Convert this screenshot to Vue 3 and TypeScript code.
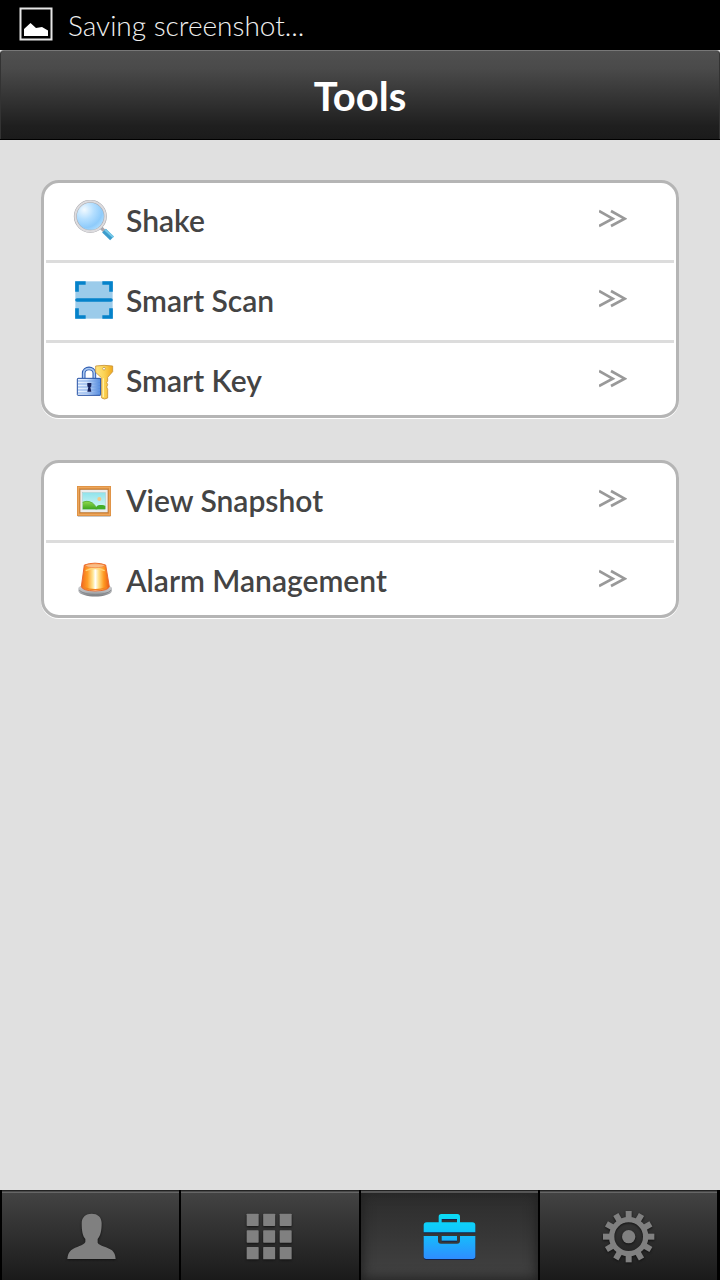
<script setup lang="ts">
type Tool = { id: string; label: string }

const groups: Tool[][] = [
  [
    { id: 'shake', label: 'Shake' },
    { id: 'scan', label: 'Smart Scan' },
    { id: 'key', label: 'Smart Key' },
  ],
  [
    { id: 'snapshot', label: 'View Snapshot' },
    { id: 'alarm', label: 'Alarm Management' },
  ],
]

const gearTeeth: number[] = Array.from({ length: 12 }, (_, i) => i * 30)
const tiles: number[] = [0, 1, 2]
const stripes: number[] = [348, 357, 366, 375, 384]
</script>

<template>
  <div class="screen">
    <div class="status">
      <svg class="status-icon" viewBox="0 0 34 34" aria-hidden="true">
        <rect x="1.5" y="1.5" width="31" height="31" fill="none" stroke="#e6e6e6" stroke-width="2" />
        <path d="M5 29V22L11.500 16L17 21L23 20L29 23.500V29Z" fill="#fff" />
      </svg>
      <span>Saving screenshot...</span>
    </div>

    <header class="header">
      <h1>Tools</h1>
    </header>

    <main class="content">
      <section v-for="(group, g) in groups" :key="g" class="card">
        <button v-for="tool in group" :key="tool.id" type="button" class="row">
          <svg v-if="tool.id === 'shake'" class="icon" viewBox="129 90 126 126" aria-hidden="true">
            <defs>
              <radialGradient id="lens" cx="0.3" cy="0.28" r="0.8">
                <stop offset="0" stop-color="#f2faff" />
                <stop offset="0.4" stop-color="#b5dfff" />
                <stop offset="0.75" stop-color="#8ecbfb" />
                <stop offset="1" stop-color="#b8e2ff" />
              </radialGradient>
            </defs>
            <path d="M211 171L224 184" stroke="#aaa7ae" stroke-width="10" />
            <path d="M222 182L246 205" stroke="#3c9ccc" stroke-width="16" />
            <path d="M225 179L250 202" stroke="#74c8e8" stroke-width="6" />
            <circle cx="181" cy="139" r="45" fill="url(#lens)" stroke="#a9a9ad" stroke-width="9" />
            <circle cx="181" cy="139" r="45" fill="none" stroke="#dddcdf" stroke-width="6" />
          </svg>

          <svg v-else-if="tool.id === 'scan'" class="icon" viewBox="129 45 126 126" aria-hidden="true">
            <rect x="136" y="49" width="112" height="112" fill="#9bcbea" />
            <g fill="none" stroke="#0582ca" stroke-width="11">
              <path d="M141 80V54H167M217 54H243V80M243 130V156H217M167 156H141V130" />
              <path d="M141 105H243" stroke-linecap="round" />
            </g>
          </svg>

          <svg v-else-if="tool.id === 'key'" class="icon" viewBox="129 285 126 126" aria-hidden="true">
            <defs>
              <linearGradient id="lock" x1="0" x2="1">
                <stop offset="0" stop-color="#eef5ff" />
                <stop offset="0.4" stop-color="#d3e4fb" />
                <stop offset="1" stop-color="#4a84dc" />
              </linearGradient>
              <linearGradient id="gold" x1="0" x2="1">
                <stop offset="0" stop-color="#ffe583" />
                <stop offset="0.5" stop-color="#fbd354" />
                <stop offset="1" stop-color="#f0a81d" />
              </linearGradient>
            </defs>
            <path d="M161 340V325C161 305 193 305 193 325V340" fill="none" stroke="#2f5db0" stroke-width="11" />
            <path d="M161 340V325C161 306 193 306 193 325V340" fill="none" stroke="#a9c8f2" stroke-width="5" />
            <rect x="142" y="340" width="70" height="51" rx="2" fill="url(#lock)" stroke="#2450a4" stroke-width="3" />
            <path v-for="y in stripes" :key="y" :d="`M144 ${y}H210`" stroke="#6f9ee4" stroke-width="2.500" />
            <path d="M172 354H184V364L181 367L184 380H172L175 367L172 364Z" fill="#17235c" />
            <path
              d="M197 303Q222 299 248 303V320L233 337V348L230 352L233 359L230 366L233 373V399Q223 405 215 399V339L197 322Z"
              fill="url(#gold)"
              stroke="#c89336"
              stroke-width="2.500"
            />
            <path d="M220 340V396" stroke="#fff0a4" stroke-width="4" />
            <circle cx="222" cy="311" r="4" fill="#fff" stroke="#b88c3c" stroke-width="2" />
          </svg>

          <svg v-else-if="tool.id === 'snapshot'" class="icon" viewBox="129 90 126 126" aria-hidden="true">
            <defs>
              <linearGradient id="sky" x1="0" y1="0" x2="0" y2="1">
                <stop offset="0" stop-color="#8fe3ec" />
                <stop offset="1" stop-color="#d9f8f4" />
              </linearGradient>
              <linearGradient id="hill" x1="0" y1="0" x2="0" y2="1">
                <stop offset="0" stop-color="#93da50" />
                <stop offset="1" stop-color="#3ba51d" />
              </linearGradient>
            </defs>
            <rect x="143" y="194" width="99" height="7" rx="2" fill="#c9c9c9" />
            <rect x="141" y="108" width="102" height="90" fill="#dd9042" />
            <rect x="145" y="112" width="94" height="82" fill="none" stroke="#efab60" stroke-width="3" />
            <rect x="150" y="118" width="84" height="70" fill="#ededed" stroke="#b87534" stroke-width="2" />
            <rect x="158" y="128" width="68" height="50" fill="url(#sky)" stroke="#88babb" stroke-width="1" />
            <circle cx="208" cy="147" r="6" fill="#f4ca85" />
            <path d="M196 178Q199 163 213 165Q222 164 226 168V178Z" fill="#43ae28" />
            <path d="M158 178V156Q179 146 197 169L202 178Z" fill="url(#hill)" />
            <path d="M158 157Q179 147 197 168" fill="none" stroke="#4ca52e" stroke-width="2" />
          </svg>

          <svg v-else class="icon" viewBox="129 330 126 126" aria-hidden="true">
            <defs>
              <linearGradient id="lamp" x1="0" x2="1">
                <stop offset="0" stop-color="#f06a1c" />
                <stop offset="0.22" stop-color="#ff9d28" />
                <stop offset="0.42" stop-color="#ffe99a" />
                <stop offset="0.5" stop-color="#ffffff" />
                <stop offset="0.62" stop-color="#ffe18a" />
                <stop offset="0.8" stop-color="#ff9a22" />
                <stop offset="1" stop-color="#e95a16" />
              </linearGradient>
              <linearGradient id="base" x1="0" y1="0" x2="0" y2="1">
                <stop offset="0" stop-color="#d8dadd" />
                <stop offset="0.6" stop-color="#b5b7ba" />
                <stop offset="1" stop-color="#777a7e" />
              </linearGradient>
            </defs>
            <path d="M145 414V423C151 445 240 445 246 423V414C240 397 151 397 145 414Z" fill="url(#base)" />
            <path d="M148 421C164 438 228 438 243 421" fill="none" stroke="#85888c" stroke-width="3" />
            <path
              d="M163 345Q195 334 227 345L238 410Q235 422 195 423Q158 422 154 410Z"
              fill="url(#lamp)"
              stroke="#e96932"
              stroke-width="3"
            />
            <ellipse cx="195" cy="347" rx="29" ry="6" fill="#f8bd87" stroke="#f3792e" stroke-width="2" />
            <path d="M167 362Q195 350 224 362" fill="none" stroke="#ffd47a" stroke-width="4" />
            <path d="M160 412Q195 426 231 412" fill="none" stroke="#f38521" stroke-width="4" />
          </svg>

          <span class="label">{{ tool.label }}</span>

          <svg class="chevron" viewBox="117 90 84 126" aria-hidden="true">
            <path d="M117 123L158 146L117 168M153 123L194 146L153 168" fill="none" stroke="#999" stroke-width="8" />
          </svg>
        </button>
      </section>
    </main>

    <nav class="tabs">
      <button type="button" class="tab" aria-label="Account">
        <svg class="tab-icon" viewBox="181 75 180 180" aria-hidden="true">
          <path
            d="M243 130C243 110 257 101 273 101C291 101 303 111 303 130C303 153 299 168 291 177V188C296 198 321 200 334 211Q344 220 345 237H200Q201 220 211 211C226 199 249 197 254 186V177C246 169 243 153 243 130Z"
            fill="#808080"
          />
        </svg>
      </button>
      <button type="button" class="tab" aria-label="Grid">
        <svg class="tab-icon" viewBox="208 75 180 180" aria-hidden="true">
          <template v-for="r in tiles" :key="r">
            <rect
              v-for="c in tiles"
              :key="c"
              :x="228 + c * 49.500"
              :y="101 + r * 50"
              width="36"
              height="37"
              rx="2"
              fill="#808080"
            />
          </template>
        </svg>
      </button>
      <button type="button" class="tab active" aria-label="Tools" aria-current="page">
        <svg class="tab-icon case" viewBox="207 75 180 180" aria-hidden="true">
          <defs>
            <linearGradient id="case" gradientUnits="userSpaceOnUse" x1="0" y1="102" x2="0" y2="238">
              <stop offset="0" stop-color="#0bdcf5" />
              <stop offset="0.35" stop-color="#10c8fb" />
              <stop offset="1" stop-color="#2f8cff" />
            </linearGradient>
          </defs>
          <path
            d="M266 127V110Q266 102 274 102H322Q330 102 330 110V127H367Q376 127 376 136V157H221V136Q221 127 230 127ZM275 127H321V117H275Z"
            fill="url(#case)"
            fill-rule="evenodd"
          />
          <path
            d="M221 168H264V182Q264 191 273 191H321Q330 191 330 182V168H376V229Q376 237 368 237H229Q221 237 221 229Z"
            fill="url(#case)"
          />
          <rect x="275" y="168" width="46" height="14" fill="url(#case)" />
        </svg>
      </button>
      <button type="button" class="tab" aria-label="Settings">
        <svg class="tab-icon" viewBox="207 75 180 180" aria-hidden="true">
          <g fill="#808080">
            <rect
              v-for="a in gearTeeth"
              :key="a"
              x="290"
              y="93"
              width="18"
              height="26"
              :transform="`rotate(${a} 299 170)`"
            />
            <circle cx="299" cy="170" r="20" />
          </g>
          <circle cx="299" cy="170" r="51" fill="none" stroke="#808080" stroke-width="16" />
        </svg>
      </button>
    </nav>
  </div>
</template>

<style>
body {
  margin: 0;
  background: #e0e0e0;
}
</style>

<style scoped>
.screen {
  display: flex;
  flex-direction: column;
  min-height: 100vh;
  background: #e0e0e0;
  font-family: Lato, 'Liberation Sans', sans-serif;
}

.status {
  display: flex;
  align-items: center;
  gap: 15px;
  height: 50px;
  padding: 0 19px;
  box-sizing: border-box;
  background: #000;
  color: #f0f0f0;
  font-size: 28px;
  font-weight: 300;
  line-height: 52px;
}

.status-icon {
  width: 34px;
  height: 34px;
  margin-bottom: 2px;
}

.header {
  height: 90px;
  box-sizing: border-box;
  border-top: 1px solid #777;
  border-bottom: 1px solid #000;
  border-radius: 4px 4px 0 0;
  background: linear-gradient(#505050, #4a4a4a 20%, #1f1f1f 85%, #1b1b1b);
  box-shadow: inset 1px 0 #333, inset -1px 0 #333;
}

h1 {
  margin: 0;
  color: #fff;
  font-size: 40px;
  font-weight: 700;
  line-height: 90px;
  text-align: center;
}

.content {
  display: flex;
  flex: 1;
  flex-direction: column;
  gap: 42px;
  padding: 40px 41px;
}

.card {
  border: 3px solid #b5b5b5;
  border-radius: 18px;
  background: #fff;
  box-shadow: 0 1px #fff;
}

.row {
  display: flex;
  align-items: flex-start;
  width: 100%;
  height: 80px;
  box-sizing: border-box;
  padding: 17px 49px 0 29px;
  border: 0;
  background: linear-gradient(#dcdcdc, #dcdcdc) center bottom / calc(100% - 4px) 3px no-repeat;
  color: #444;
  font: inherit;
  text-align: left;
}

.row:last-child {
  height: 72px;
  background: none;
}

.icon {
  width: 42px;
  height: 42px;
}

.label {
  flex: 1;
  padding-left: 11px;
  font-size: 30px;
  font-weight: 600;
  line-height: 40px;
}

.chevron {
  width: 28px;
  height: 42px;
}

.tabs {
  display: grid;
  grid-template-columns: repeat(4, 1fr);
  gap: 2px;
  height: 90px;
  box-sizing: border-box;
  padding: 0 3px 0 2px;
  background: #000;
}

.tab {
  display: flex;
  align-items: center;
  justify-content: center;
  padding: 0;
  border: 0;
  background: linear-gradient(#444, #1a1a1a);
  box-shadow: inset 0 1px #222, inset 0 2px #484848, inset 0 3px #666;
}

.tab.active {
  background: linear-gradient(#2b2b2b, #424242);
  box-shadow: inset 0 1px #222, inset 0 3px #555, inset 0 0 12px 2px #222;
}

.tab-icon {
  width: 60px;
  height: 60px;
  filter: drop-shadow(0 1px 1px #111);
}

.tab-icon.case {
  filter: drop-shadow(0 1px 0 #14234c);
}
</style>
